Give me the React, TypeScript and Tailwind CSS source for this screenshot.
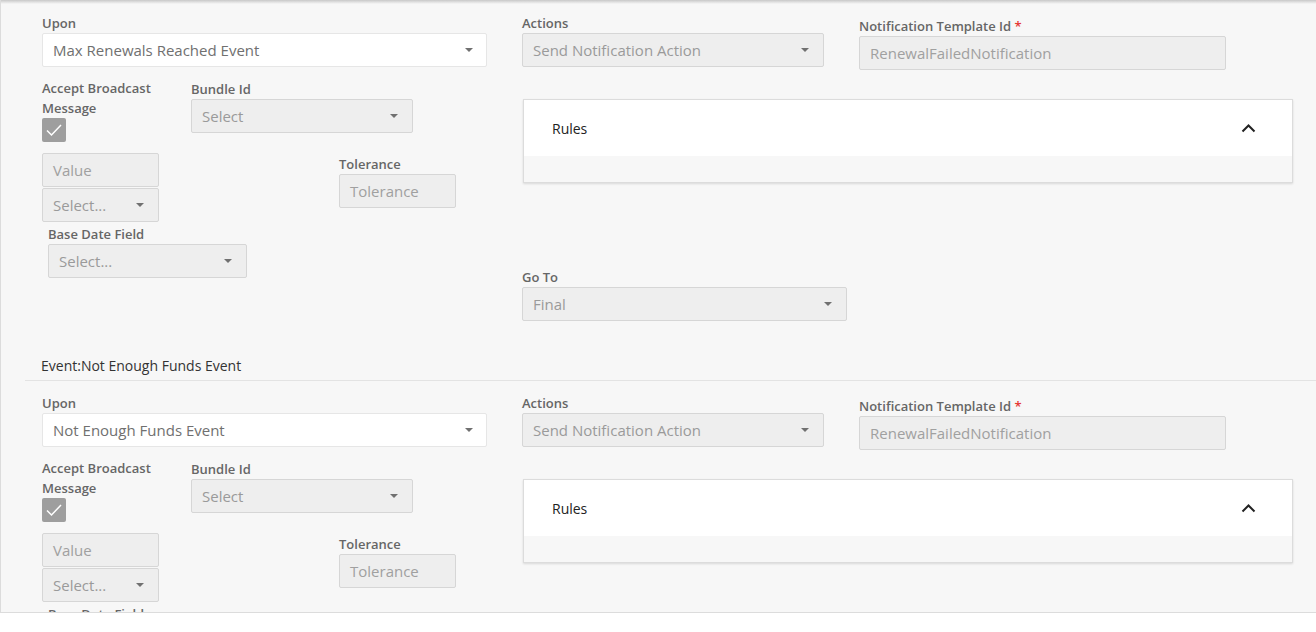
import React from "react";

const font = { fontFamily: '"Open Sans", "Noto Sans", sans-serif' };

function Caret() {
  return (
    <svg width="8" height="4" viewBox="0 0 8 4" className="shrink-0">
      <path d="M0 0 L8 0 L4 4 Z" fill="#707070" />
    </svg>
  );
}

function Label({ children, className = "" }: { children: React.ReactNode; className?: string }) {
  return (
    <div className={`h-[20px] leading-[20px] text-[13px] font-semibold text-[#666] whitespace-nowrap ${className}`}>
      {children}
    </div>
  );
}

function Select({
  value,
  white = false,
  className = "",
  pad = "pr-[14px]",
}: {
  value: string;
  white?: boolean;
  className?: string;
  pad?: string;
}) {
  return (
    <div
      className={`h-[34px] flex items-center justify-between pl-[10px] ${pad} rounded-[2px] border text-[15px] ${
        white ? "bg-white border-[#e6e6e6] text-[#707070]" : "bg-[#eeeeee] border-[#d6d6d6] text-[#9a9a9a]"
      } ${className}`}
    >
      <span className="whitespace-nowrap">{value}</span>
      <Caret />
    </div>
  );
}

function Input({ value, className = "" }: { value: string; className?: string }) {
  return (
    <div
      className={`h-[34px] flex items-center pl-[10px] rounded-[2px] border bg-[#eeeeee] border-[#d6d6d6] text-[15px] text-[#a0a0a0] ${className}`}
    >
      <span className="whitespace-nowrap">{value}</span>
    </div>
  );
}

function Checkbox() {
  return (
    <div className="w-[24px] h-[24px] rounded-[2px] bg-[#9e9e9e] flex items-center justify-center">
      <svg width="18" height="14" viewBox="0 0 18 14">
        <path d="M2 7.5 L6.5 12 L16 2" fill="none" stroke="#fff" strokeWidth="1.5" />
      </svg>
    </div>
  );
}

function RulesCard() {
  return (
    <div className="mt-[29px] ml-[1px] w-[770px] border border-[#dcdcdc] shadow-[0_1px_2px_rgba(0,0,0,0.12)]">
      <div className="h-[56px] bg-white flex items-center justify-between pl-[28px] pr-[36px]">
        <span className="text-[14px] text-[#222]">Rules</span>
        <svg width="15" height="9" viewBox="0 0 15 9">
          <path d="M1.5 7.5 L7.5 1.5 L13.5 7.5" fill="none" stroke="#222" strokeWidth="2" />
        </svg>
      </div>
      <div className="h-[26px] bg-[#f7f7f7]" />
    </div>
  );
}

function SectionBody({ upon, pt }: { upon: string; pt: string }) {
  return (
    <div className={`flex pl-[41px] ${pt}`}>
      {/* left column */}
      <div className="w-[445px] shrink-0">
        <Label>Upon</Label>
        <Select value={upon} white className="w-full" pad="pr-[13px]" />
        <div className="flex mt-[11px]">
          <div className="w-[149px] shrink-0">
            <Label>Accept Broadcast</Label>
            <Label>Message</Label>
            <Checkbox />
          </div>
          <div className="pt-[1px]">
            <Label>Bundle Id</Label>
            <Select value="Select" className="w-[222px]" pad="pr-[14px]" />
          </div>
        </div>
        <div className="flex mt-[11px]">
          <div className="w-[117px] shrink-0">
            <Input value="Value" className="w-full" />
            <Select value="Select..." className="w-full mt-[1px]" pad="pr-[14px]" />
          </div>
          <div className="ml-[180px] pt-[1px]">
            <Label>Tolerance</Label>
            <Input value="Tolerance" className="w-[117px]" />
          </div>
        </div>
        <div className="ml-[6px] mt-[2px]">
          <Label>Base Date Field</Label>
          <Select value="Select..." className="w-[199px]" pad="pr-[14px]" />
        </div>
      </div>
      {/* right column */}
      <div className="ml-[35px]">
        <div className="flex items-start">
          <div className="w-[302px]">
            <Label>Actions</Label>
            <Select value="Send Notification Action" className="w-full" pad="pr-[14px]" />
          </div>
          <div className="ml-[35px] w-[367px] pt-[3px]">
            <Label>
              Notification Template Id <span className="text-[#e53935]">*</span>
            </Label>
            <Input value="RenewalFailedNotification" className="w-full" />
          </div>
        </div>
        <RulesCard />
        <div className="mt-[84px] w-[325px]">
          <Label>Go To</Label>
          <Select value="Final" className="w-full" pad="pr-[14px]" />
        </div>
      </div>
    </div>
  );
}

export default function App() {
  return (
    <div className="w-[1316px] h-[632px] bg-white" style={font}>
      <div className="relative h-[613px] overflow-hidden bg-[#f7f7f7] border-l border-b border-[#dcdcdc]">
        <div className="absolute inset-x-0 top-0 h-[4px] bg-gradient-to-b from-[#c8c8c8] to-transparent pointer-events-none" />
        <SectionBody upon="Max Renewals Reached Event" pt="pt-[13px]" />
        <div className="ml-[24px] mt-[35px] pb-[4px] border-b border-[#e3e3e3]">
          <div className="pl-[16px] h-[20px] leading-[20px] text-[14px] text-[#333]">Event:Not Enough Funds Event</div>
        </div>
        <SectionBody upon="Not Enough Funds Event" pt="pt-[12px]" />
      </div>
    </div>
  );
}
